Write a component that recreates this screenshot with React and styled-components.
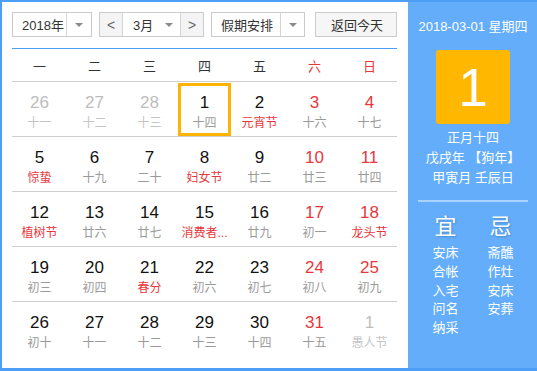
import React from "react";
import styled, { createGlobalStyle } from "styled-components";

const GlobalStyle = createGlobalStyle`
  html, body { margin: 0; padding: 0; background: #fff; }
  body { font-family: "Liberation Sans", "Noto Sans CJK SC", sans-serif; }
`;

const Frame = styled.div`
  width: 537px;
  height: 371px;
  box-sizing: border-box;
  display: flex;
  background: #4d9ef7;
  padding: 2px 0 3px 2px;
`;

const Main = styled.div`
  width: 406px;
  background: #fff;
  padding: 10px 11px 0 10px;
  box-sizing: border-box;
`;

const Toolbar = styled.div`
  display: flex;
  align-items: center;
  height: 25px;
  font-size: 13px;
  color: #333;
`;

const Box = styled.div`
  display: flex;
  height: 25px;
  box-sizing: border-box;
  border: 1px solid #cbcbcb;
  width: ${(p) => p.w}px;
  margin-right: ${(p) => p.mr || 0}px;
  background: #fff;
`;

const Label = styled.div`
  flex: 1;
  display: flex;
  align-items: center;
  padding-left: ${(p) => p.pl}px;
  font-size: 13px;
  position: relative;
`;

const Caret = styled.div`
  width: ${(p) => p.w}px;
  display: flex;
  align-items: center;
  justify-content: center;
  border-left: ${(p) => (p.line ? "1px solid #d5d5d5" : "none")};
  &::before {
    content: "";
    border-left: 4px solid transparent;
    border-right: 4px solid transparent;
    border-top: 4px solid #8a8a8a;
  }
`;

const Step = styled.div`
  width: 22px;
  display: flex;
  align-items: center;
  justify-content: center;
  background: #f4f4f4;
  color: #666;
  font-size: 14px;
  border-left: ${(p) => (p.right ? "1px solid #d5d5d5" : "none")};
  border-right: ${(p) => (p.right ? "none" : "1px solid #d5d5d5")};
`;

const Button = styled.div`
  width: 82px;
  height: 25px;
  box-sizing: border-box;
  margin-left: auto;
  border: 1px solid #cbcbcb;
  background: #f6f6f6;
  display: flex;
  align-items: center;
  justify-content: center;
  font-size: 13px;
  color: #333;
  padding-left: 2px;
`;

const BlueRule = styled.div`
  height: 1px;
  background: #4d9ef7;
  margin-top: 11px;
`;

const Grid = styled.div`
  display: grid;
  grid-template-columns: repeat(7, 55px);
`;

const Head = styled.div`
  height: 33px;
  display: flex;
  align-items: center;
  justify-content: center;
  font-size: 13px;
  color: ${(p) => (p.red ? "#e8373c" : "#333")};
  border-bottom: 1px solid #cfcfcf;
  padding-top: 1px;
  box-sizing: border-box;
`;

const Cell = styled.div`
  height: 55px;
  box-sizing: border-box;
  border-bottom: ${(p) => (p.last ? "none" : "1px solid #cfcfcf")};
  display: flex;
  flex-direction: column;
  align-items: center;
  padding-top: 11px;
  outline: ${(p) => (p.sel ? "3px solid #ffb400" : "none")};
  outline-offset: -4px;
`;

const Num = styled.div`
  font-size: 17px;
  line-height: 20px;
  color: ${(p) => (p.other ? "#bdbdbd" : p.red ? "#e8373c" : "#111")};
`;

const Lunar = styled.div`
  font-size: 12px;
  line-height: 18px;
  margin-top: 1px;
  color: ${(p) => (p.fest ? "#e8373c" : p.other ? "#c4c4c4" : "#9a9a9a")};
`;

const Side = styled.div`
  flex: 1;
  background: #63adfb;
  color: #fff;
  display: flex;
  flex-direction: column;
  align-items: center;
  padding: 0 9px 0 10px;
`;

const DateLine = styled.div`
  font-size: 13px;
  margin-top: 16px;
  line-height: 18px;
`;

const DayBox = styled.div`
  width: 74px;
  height: 74px;
  margin-top: 14px;
  background: #ffb700;
  border-radius: 3px;
  display: flex;
  align-items: center;
  justify-content: center;
  font-size: 53px;
  font-family: "Liberation Sans", sans-serif;
`;

const Info = styled.div`
  margin-top: 4px;
  font-size: 13px;
  line-height: 20px;
  text-align: center;
`;

const Divider = styled.div`
  align-self: stretch;
  height: 2px;
  background: rgba(255, 255, 255, 0.45);
  margin-top: 12px;
`;

const Almanac = styled.div`
  align-self: stretch;
  display: grid;
  grid-template-columns: 55px 55px;
  margin-top: 10px;
`;

const Col = styled.div`
  display: flex;
  flex-direction: column;
  align-items: center;
`;

const Big = styled.div`
  font-size: 22px;
  line-height: 30px;
  text-shadow: 1px 1px 2px rgba(0, 0, 0, 0.2);
  margin-bottom: 2px;
`;

const Item = styled.div`
  font-size: 13px;
  line-height: 18.8px;
`;

const weeks = ["一", "二", "三", "四", "五", "六", "日"];

const rows = [
  [["26", "十一", "o"], ["27", "十二", "o"], ["28", "十三", "o"], ["1", "十四", "s"], ["2", "元宵节", "f"], ["3", "十六"], ["4", "十七"]],
  [["5", "惊蛰", "f"], ["6", "十九"], ["7", "二十"], ["8", "妇女节", "f"], ["9", "廿二"], ["10", "廿三"], ["11", "廿四"]],
  [["12", "植树节", "f"], ["13", "廿六"], ["14", "廿七"], ["15", "消费者...", "f"], ["16", "廿九"], ["17", "初一"], ["18", "龙头节", "f"]],
  [["19", "初三"], ["20", "初四"], ["21", "春分", "f"], ["22", "初六"], ["23", "初七"], ["24", "初八"], ["25", "初九"]],
  [["26", "初十"], ["27", "十一"], ["28", "十二"], ["29", "十三"], ["30", "十四"], ["31", "十五"], ["1", "愚人节", "o"]],
];

const yi = ["安床", "合帐", "入宅", "问名", "纳采"];
const ji = ["斋醮", "作灶", "安床", "安葬"];

export default function App() {
  return (
    <>
      <GlobalStyle />
      <Frame>
        <Main>
          <Toolbar>
            <Box w={80} mr={7}>
              <Label pl={9}>2018年</Label>
              <Caret w={24} line />
            </Box>
            <Box w={105} mr={7}>
              <Step>&lt;</Step>
              <Label pl={10}>3月</Label>
              <Caret w={22} />
              <Step right>&gt;</Step>
            </Box>
            <Box w={94}>
              <Label pl={9}>假期安排</Label>
              <Caret w={23} line />
            </Box>
            <Button>返回今天</Button>
          </Toolbar>
          <BlueRule />
          <Grid>
            {weeks.map((w, i) => (
              <Head key={w} red={i > 4}>{w}</Head>
            ))}
            {rows.map((row, r) =>
              row.map(([n, l, k], c) => (
                <Cell key={r + "-" + c} sel={k === "s"} last={r === rows.length - 1}>
                  <Num other={k === "o"} red={c > 4}>{n}</Num>
                  <Lunar other={k === "o"} fest={k === "f"}>{l}</Lunar>
                </Cell>
              ))
            )}
          </Grid>
        </Main>
        <Side>
          <DateLine>2018-03-01 星期四</DateLine>
          <DayBox>1</DayBox>
          <Info>
            <div>正月十四</div>
            <div>戊戌年 【狗年】</div>
            <div>甲寅月 壬辰日</div>
          </Info>
          <Divider />
          <Almanac>
            <Col>
              <Big>宜</Big>
              {yi.map((t) => <Item key={t}>{t}</Item>)}
            </Col>
            <Col>
              <Big>忌</Big>
              {ji.map((t, i) => <Item key={i}>{t}</Item>)}
            </Col>
          </Almanac>
        </Side>
      </Frame>
    </>
  );
}
